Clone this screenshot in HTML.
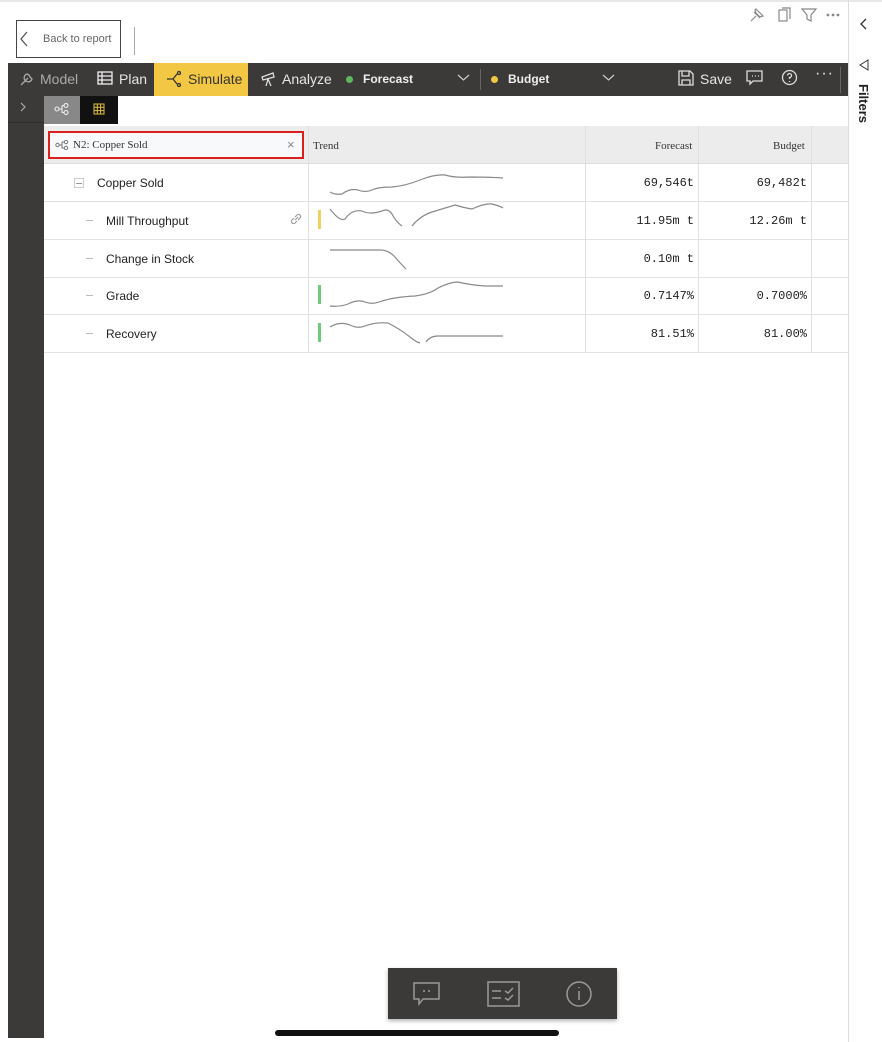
<!DOCTYPE html>
<html><head><style>
*{margin:0;padding:0;box-sizing:border-box}
body{width:882px;height:1042px;background:#fff;position:relative;overflow:hidden;font-family:"Liberation Sans",sans-serif}
.a{position:absolute}
.tb{color:#e6e6e6;font-size:14px}
.hd{font-family:"Liberation Serif",serif;font-size:11px;color:#333}
.row{position:absolute;left:44px;width:804px;height:38px;border-bottom:1px solid #e2e2e2}
.nm{position:absolute;font-size:12px;color:#222;top:12px}
.num{position:absolute;font-family:"Liberation Mono",monospace;font-size:12px;color:#222;top:12px;text-align:right}
.dash{position:absolute;left:42px;top:18px;width:7px;height:1px;background:#bbb}
</style></head><body>
<div class="a" style="left:0;top:0;width:882px;height:2px;background:#e8e8e8"></div>
<div class="a" style="left:16px;top:20px;width:105px;height:38px;border:1px solid #444;"></div>
<svg class="a" style="left:19px;top:30px" width="10" height="18"><path d="M8 2 L2 9 L8 16" fill="none" stroke="#555" stroke-width="1.3"/></svg>
<div class="a" style="left:43px;top:33px;font-size:11px;color:#666">Back to report</div>
<div class="a" style="left:134px;top:27px;width:1px;height:28px;background:#aaa"></div>
<svg class="a" style="left:748px;top:6px" width="100" height="18" fill="none" stroke="#888" stroke-width="1.2">
<path d="M3 15 L8 10 M6 6 L12 12 M8 3 L15 10 L12 11 L8 7 L7 4Z"/>
<rect x="31" y="4" width="8" height="11"/><path d="M34 2 L42 2 L42 13"/>
<path d="M54 3 L68 3 L63 9 L63 15 L59 13 L59 9Z"/>
<circle cx="80" cy="9" r=".8" fill="#888"/><circle cx="85" cy="9" r=".8" fill="#888"/><circle cx="90" cy="9" r=".8" fill="#888"/>
</svg>
<div class="a" style="left:848px;top:0;width:1px;height:1042px;background:#ddd"></div>
<svg class="a" style="left:858px;top:17px" width="12" height="14"><path d="M8 2 L3 7 L8 12" fill="none" stroke="#333" stroke-width="1.3"/></svg>
<svg class="a" style="left:857px;top:58px" width="14" height="14"><path d="M11 2 L3 7 L11 12Z" fill="none" stroke="#333" stroke-width="1"/></svg>
<div class="a" style="left:856px;top:84px;font-size:13px;font-weight:bold;color:#222;writing-mode:vertical-rl">Filters</div>
<div class="a" style="left:8px;top:63px;width:36px;height:975px;background:#3b3a39"></div>
<div class="a" style="left:8px;top:63px;width:840px;height:33px;background:#3b3a39"></div>
<div class="a" style="left:154px;top:63px;width:94px;height:33px;background:#f2c744"></div>
<svg class="a" style="left:18px;top:70px" width="18" height="18" fill="none" stroke="#aaa" stroke-width="1.3"><path d="M3 15 L10 8 M9 4 A4 4 0 1 0 14 9 L12 7 L11 5Z"/></svg>
<div class="a tb" style="left:40px;top:71px;color:#aaa">Model</div>
<svg class="a" style="left:97px;top:71px" width="16" height="14" fill="none" stroke="#eee" stroke-width="1.3"><rect x="1" y="1" width="14" height="12"/><path d="M1 5H15M1 9H15M5 1V13"/></svg>
<div class="a tb" style="left:119px;top:71px">Plan</div>
<svg class="a" style="left:166px;top:70px" width="18" height="18" fill="none" stroke="#333" stroke-width="1.3"><path d="M1 9H7L11 4M7 9L11 14"/><circle cx="13" cy="3" r="1.5"/><circle cx="13" cy="15" r="1.5"/></svg>
<div class="a tb" style="left:188px;top:71px;color:#333">Simulate</div>
<svg class="a" style="left:259px;top:70px" width="18" height="18" fill="none" stroke="#ddd" stroke-width="1.3"><path d="M3 7 L14 3 L15 7 L4 10Z M9 9 L7 16 M9 9 L12 16"/></svg>
<div class="a tb" style="left:282px;top:71px">Analyze</div>
<div class="a" style="left:346px;top:76px;width:7px;height:7px;border-radius:50%;background:#5cb85c"></div>
<div class="a" style="left:363px;top:72px;font-size:12px;font-weight:bold;color:#eee">Forecast</div>
<svg class="a" style="left:457px;top:73px" width="13" height="10"><path d="M1 2L6.5 7L12 2" fill="none" stroke="#ccc" stroke-width="1.2"/></svg>
<div class="a" style="left:480px;top:69px;width:1px;height:21px;background:#666"></div>
<div class="a" style="left:491px;top:76px;width:7px;height:7px;border-radius:50%;background:#f2c744"></div>
<div class="a" style="left:508px;top:72px;font-size:12px;font-weight:bold;color:#eee">Budget</div>
<svg class="a" style="left:602px;top:73px" width="13" height="10"><path d="M1 2L6.5 7L12 2" fill="none" stroke="#ccc" stroke-width="1.2"/></svg>
<svg class="a" style="left:678px;top:70px" width="16" height="16" fill="none" stroke="#ddd" stroke-width="1.3"><path d="M1 1H12L15 4V15H1Z M4 1V6H11V1 M4 15V10H12V15"/></svg>
<div class="a tb" style="left:700px;top:71px">Save</div>
<svg class="a" style="left:746px;top:70px" width="18" height="16" fill="none" stroke="#ddd" stroke-width="1.3"><path d="M1 1H16V11H7L4 14V11H1Z"/><path d="M6 6h1M9 6h1M12 6h1"/></svg>
<svg class="a" style="left:781px;top:69px" width="17" height="17" fill="none" stroke="#ddd" stroke-width="1.3"><circle cx="8.5" cy="8.5" r="7"/><path d="M6.5 6.5A2 2 0 1 1 8.5 8.5V10M8.5 12V13"/></svg>
<div class="a tb" style="left:815px;top:65px;font-size:16px;letter-spacing:1px">···</div>
<div class="a" style="left:840px;top:67px;width:1px;height:26px;background:#666"></div>
<svg class="a" style="left:19px;top:101px" width="8" height="12"><path d="M2 2L6 6L2 10" fill="none" stroke="#aaa" stroke-width="1.2"/></svg>
<div class="a" style="left:8px;top:122px;width:36px;height:1px;background:#2e2d2c"></div>
<div class="a" style="left:44px;top:96px;width:36px;height:28px;background:#888"></div>
<svg class="a" style="left:54px;top:103px" width="16" height="12" fill="none" stroke="#eee" stroke-width="1.1"><circle cx="3" cy="6" r="2"/><circle cx="12" cy="2.5" r="2"/><circle cx="12" cy="9.5" r="2"/><path d="M5 6H8M8 2.5V9.5H10M8 2.5H10"/></svg>
<div class="a" style="left:80px;top:96px;width:38px;height:28px;background:#111"></div>
<svg class="a" style="left:93px;top:103px" width="12" height="12" fill="none" stroke="#e0c040" stroke-width="1"><rect x="1" y="1" width="10" height="10"/><path d="M1 4.3H11M1 7.6H11M4.3 1V11M7.6 1V11"/></svg>
<div class="a" style="left:44px;top:126px;width:804px;height:38px;background:#ececec;border-bottom:1px solid #ddd"></div>
<div class="a" style="left:48px;top:131px;width:256px;height:28px;border:2px solid #d9201d;background:#f7f9fb"></div>
<svg class="a" style="left:55px;top:140px" width="14" height="10" fill="none" stroke="#777" stroke-width="1"><circle cx="2.5" cy="5" r="1.7"/><circle cx="11" cy="2" r="1.7"/><circle cx="11" cy="8" r="1.7"/><path d="M4 5H7M7 2V8H9M7 2H9"/></svg>
<div class="a hd" style="left:73px;top:139px">N2: Copper Sold</div>
<div class="a" style="left:287px;top:137px;font-size:13px;color:#888">×</div>
<div class="a hd" style="left:313px;top:140px">Trend</div>
<div class="a hd" style="left:655px;top:140px">Forecast</div>
<div class="a hd" style="left:773px;top:140px">Budget</div>
<div class="a" style="left:308px;top:126px;width:1px;height:227px;background:#e0e0e0"></div>
<div class="a" style="left:585px;top:126px;width:1px;height:227px;background:#e0e0e0"></div>
<div class="a" style="left:698px;top:126px;width:1px;height:227px;background:#e0e0e0"></div>
<div class="a" style="left:811px;top:126px;width:1px;height:227px;background:#e0e0e0"></div>
<div class="row" style="top:164px">
 <div class="a" style="left:30px;top:14px;width:10px;height:10px;border:1px solid #ccc"></div>
 <div class="a" style="left:32px;top:19px;width:6px;height:1px;background:#999"></div>
 <div class="nm" style="left:53px">Copper Sold</div>
 <div class="num" style="left:559px;width:91px">69,546t</div>
 <div class="num" style="left:660px;width:103px">69,482t</div>
</div>
<div class="row" style="top:202px">
 <div class="dash"></div><div class="nm" style="left:62px">Mill Throughput</div>
 <svg class="a" style="left:246px;top:11px" width="12" height="12" fill="none" stroke="#999" stroke-width="1.1"><path d="M5 7L8 4M4 5L2 7A2 2 0 0 0 5 10L7 8M8 7L10 5A2 2 0 0 0 7 2L5 4"/></svg>
 <div class="a" style="left:274px;top:8px;width:3px;height:19px;background:#f0d060"></div>
 <div class="num" style="left:559px;width:91px">11.95m t</div>
 <div class="num" style="left:660px;width:103px">12.26m t</div>
</div>
<div class="row" style="top:240px">
 <div class="dash"></div><div class="nm" style="left:62px">Change in Stock</div>
 <div class="num" style="left:559px;width:91px">0.10m t</div>
</div>
<div class="row" style="top:277px">
 <div class="dash"></div><div class="nm" style="left:62px">Grade</div>
 <div class="a" style="left:274px;top:8px;width:3px;height:19px;background:#6dcc7a"></div>
 <div class="num" style="left:559px;width:91px">0.7147%</div>
 <div class="num" style="left:660px;width:103px">0.7000%</div>
</div>
<div class="row" style="top:315px">
 <div class="dash"></div><div class="nm" style="left:62px">Recovery</div>
 <div class="a" style="left:274px;top:8px;width:3px;height:19px;background:#6dcc7a"></div>
 <div class="num" style="left:559px;width:91px">81.51%</div>
 <div class="num" style="left:660px;width:103px">81.00%</div>
</div>
<svg class="a" style="left:320px;top:164px" width="200" height="190" fill="none" stroke="#8a8a8a" stroke-width="1.2">
<path d="M10 28 Q15 31 22 30 Q30 24 38 26 Q45 29 52 26 Q58 23 72 23 Q85 22 100 16 Q115 10 125 11 Q135 14 150 13 Q170 13 183 14"/>
<path d="M10 45 Q20 58 25 55 Q32 45 42 47 Q50 51 62 47 Q68 44 72 50 Q76 58 82 62 M92 62 Q100 52 112 48 Q125 44 135 41 Q145 44 152 45 Q165 39 172 40 Q180 42 183 44"/>
<path d="M10 86 L60 86 Q68 86 74 92 Q80 99 86 105"/>
<path d="M10 142 Q20 143 28 140 Q38 135 45 138 Q52 141 62 137 Q75 133 95 132 Q110 130 118 124 Q130 118 138 118 Q150 121 165 122 Q175 122 183 122"/>
<path d="M10 163 Q20 157 30 161 Q38 165 45 162 Q55 158 68 159 Q80 165 90 173 Q96 178 100 179 M106 178 Q110 172 118 172 L183 172"/>
</svg>
<div class="a" style="left:388px;top:968px;width:229px;height:51px;background:#3b3a39;box-shadow:0 2px 4px rgba(0,0,0,.3)"></div>
<svg class="a" style="left:410px;top:979px" width="210" height="32" fill="none" stroke="#999" stroke-width="1.5">
<path d="M4 4H29V20H13L9 25V20H4Z"/><path d="M14 11V13M19 11V13"/>
<rect x="78" y="3" width="31" height="24"/><path d="M82 12H91M82 19H91M95 12L98 14L103 9M95 19L98 21L103 16"/>
<circle cx="169" cy="15" r="12"/><path d="M169 12V21M169 8V9"/>
</svg>
<div class="a" style="left:275px;top:1030px;width:284px;height:6px;border-radius:3px;background:#111"></div>
</body></html>
